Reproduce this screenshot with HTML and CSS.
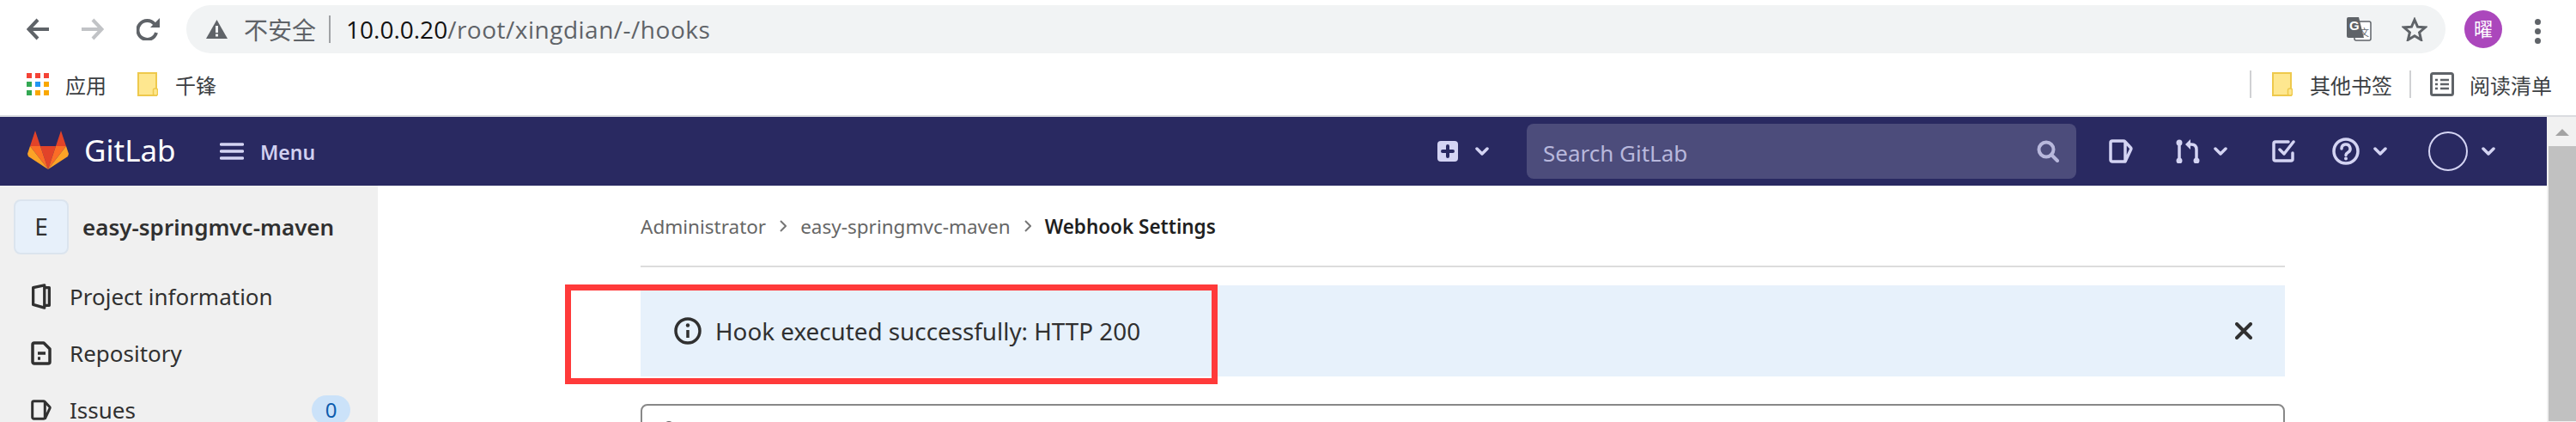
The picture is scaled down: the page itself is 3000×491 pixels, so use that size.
FILE: index.html
```html
<!DOCTYPE html>
<html lang="zh-CN">
<head>
  <meta charset="UTF-8" />
  <title>Webhook Settings</title>
  <link rel="stylesheet" href="styles.css">
</head>
<body>

  <!-- Browser toolbar -->
  <div class="toolbar">
    <svg class="tool-icon" viewBox="0 0 26 26"><path class="stroke-grey" d="M26 13H3M13 2 2.500 13 13 24"/></svg>
    <svg class="tool-icon tool-forward" viewBox="0 0 26 26"><path class="stroke-light" d="M0 13h23M13 2l10.500 11L13 24"/></svg>
    <svg class="tool-icon tool-reload" viewBox="0 0 27 26"><path class="stroke-grey" d="M23 17a11 11 0 1 1-2-10"/><path class="fill-grey" d="M27 0v11H16z"/></svg>

    <div class="omnibox">
      <svg class="warn-icon" viewBox="0 0 25 22"><path class="fill-grey" d="M12.500 0 25 22H0z"/><rect x="11" y="7" width="3" height="8" fill="#f1f3f4"/><rect x="11" y="16.500" width="3" height="3" fill="#f1f3f4"/></svg>
      <span class="not-secure">不安全</span>
      <span class="omni-sep"></span>
      <span class="url"><b>10.0.0.20</b>/root/xingdian/-/hooks</span>
      <svg class="translate-icon" viewBox="0 0 29 28">
        <rect x="9" y="5" width="19" height="22" rx="2" fill="#fff" stroke="#5f6368" stroke-width="1.500"/>
        <path class="fill-grey" d="M2 0h12l6 24H2a2 2 0 0 1-2-2V2a2 2 0 0 1 2-2z"/>
        <text x="3" y="15" class="translate-g">G</text>
        <text x="15" y="22" class="translate-x">文</text>
      </svg>
      <svg class="star-icon" viewBox="0 0 30 28"><path d="M15 3l3.500 8.200 8.800.700-6.700 5.800 2 8.600L15 21.700l-7.600 4.600 2-8.600L2.700 11.900l8.800-.700z" fill="none" stroke="#5f6368" stroke-width="3"/></svg>
    </div>

    <div class="profile">曜</div>
    <div class="kebab"><i></i><i></i><i></i></div>
  </div>

  <!-- Bookmarks -->
  <div class="bookmarks">
    <div class="apps-grid">
      <i class="red"></i><i class="red"></i><i class="red"></i>
      <i class="green"></i><i class="blue"></i><i class="orange"></i>
      <i class="green"></i><i class="orange"></i><i class="orange"></i>
    </div>
    <span class="bm-label bm-apps">应用</span>
    <svg class="folder" viewBox="0 0 24 28"><path d="M1 1h21v26H1z" fill="#fee78f" stroke="#eec94c" stroke-width="2"/><rect x="18.500" y="19" width="5" height="8" rx="2" fill="#fee78f" stroke="#eec94c" stroke-width="1.500"/></svg>
    <span class="bm-label">千锋</span>
    <span class="bm-spacer"></span>
    <span class="bm-sep"></span>
    <svg class="folder" viewBox="0 0 24 28"><path d="M1 1h21v26H1z" fill="#fee78f" stroke="#eec94c" stroke-width="2"/><rect x="18.500" y="19" width="5" height="8" rx="2" fill="#fee78f" stroke="#eec94c" stroke-width="1.500"/></svg>
    <span class="bm-label">其他书签</span>
    <span class="bm-sep"></span>
    <svg class="reading-icon" viewBox="0 0 28 28"><rect x="1.500" y="1.500" width="25" height="25" rx="2" fill="none" stroke="#5f6368" stroke-width="3"/><path class="stroke-list" d="M6 9h3M12 9h10M6 14h3M12 14h10M6 19h3M12 19h10"/></svg>
    <span class="bm-label bm-reading">阅读清单</span>
  </div>

  <div class="viewport">
    <div class="page">

      <!-- GitLab navbar -->
      <nav class="navbar">
        <svg class="tanuki" viewBox="0 0 48 45">
          <path fill="#e24329" d="M9 0l6 18H3zM39 0l6 18H33zM15 18h18l-9 27z"/>
          <path fill="#fc6d26" d="M3 18h12l9 27zM33 18h12L24 45z"/>
          <path fill="#fca326" d="M3 18 0 27l1 3 23 15zM45 18l3 9-1 3-23 15z"/>
        </svg>
        <span class="brand">GitLab</span>
        <svg class="nav-icon burger" viewBox="0 0 28 20"><path d="M1.500 2h25M1.500 10h25M1.500 18h25"/></svg>
        <span class="menu-label">Menu</span>
        <span class="nav-spacer"></span>

        <svg class="nav-plus" viewBox="0 0 24 24"><rect width="24" height="24" rx="4" fill="#d4d4f3"/><path d="M12 6v12M6 12h12" stroke="#292961" stroke-width="4" stroke-linecap="round"/></svg>
        <svg class="chevron chevron-plus" viewBox="0 0 16 12"><path d="M2 3l6 6 6-6"/></svg>

        <div class="search">
          <span class="search-text">Search GitLab</span>
          <svg class="search-icon" viewBox="0 0 26 26"><circle cx="11" cy="11" r="8.500"/><path d="M17 17l7 7"/></svg>
        </div>

        <svg class="nav-icon issues-top" viewBox="0 0 28 28"><path d="M4 2h13a2 2 0 0 1 2 2v20a2 2 0 0 1-2 2H4a2 2 0 0 1-2-2V4a2 2 0 0 1 2-2zM19 3l6.500 7a1.500 1.500 0 0 1 .3 1.500L19 26"/></svg>
        <svg class="nav-icon mr-top" viewBox="0 0 28 28"><path d="M4 4v21M24 25V12q0-6-6-6h-3"/><circle class="dot" cx="4" cy="4" r="3.500"/><circle class="dot" cx="4" cy="25" r="3.500"/><circle class="dot" cx="24" cy="25" r="3.500"/><path class="dot" d="M11 6l6-6v12z"/></svg>
        <svg class="chevron chevron-mr" viewBox="0 0 16 12"><path d="M2 3l6 6 6-6"/></svg>
        <svg class="nav-icon todo-top" viewBox="0 0 28 26"><path d="M19 2H4a2 2 0 0 0-2 2v18a2 2 0 0 0 2 2h18a2 2 0 0 0 2-2v-7M9 11l5 5L25 2"/></svg>
        <svg class="nav-icon help-top" viewBox="0 0 32 32"><circle cx="16" cy="16" r="14"/><path d="M11 13a5 5 0 1 1 7.500 4.300c-1.500.9-2.500 1.700-2.500 3.200"/><circle class="dot" cx="16" cy="24.500" r="2"/></svg>
        <svg class="chevron chevron-help" viewBox="0 0 16 12"><path d="M2 3l6 6 6-6"/></svg>
        <div class="nav-avatar"></div>
        <svg class="chevron chevron-user" viewBox="0 0 16 12"><path d="M2 3l6 6 6-6"/></svg>
      </nav>

      <div class="layout">
        <aside class="sidebar">
          <div class="project">
            <div class="project-tile">E</div>
            <span class="project-name">easy-springmvc-maven</span>
          </div>
          <div class="side-item">
            <svg class="side-icon" viewBox="0 0 24 32"><path d="M2 5 16 2v28L2 26zM16 5h6v22h-6"/></svg>
            <span>Project information</span>
          </div>
          <div class="side-item">
            <svg class="side-icon" viewBox="0 0 24 28"><path d="M4 2h11l7 7v15a2 2 0 0 1-2 2H4a2 2 0 0 1-2-2V4a2 2 0 0 1 2-2z"/><path d="M8 14h9M8 20h3"/></svg>
            <span>Repository</span>
          </div>
          <div class="side-item side-last">
            <svg class="side-icon" viewBox="0 0 28 28"><path d="M4 2h13a2 2 0 0 1 2 2v20a2 2 0 0 1-2 2H4a2 2 0 0 1-2-2V4a2 2 0 0 1 2-2zM19 3l6.500 7a1.500 1.500 0 0 1 .3 1.500L19 26"/></svg>
            <span>Issues</span>
            <span class="badge">0</span>
          </div>
        </aside>

        <main class="content">
          <div class="breadcrumb">
            <span>Administrator</span>
            <svg class="crumb-sep" viewBox="0 0 8 14"><path d="M1 1l6 6-6 6"/></svg>
            <span>easy-springmvc-maven</span>
            <svg class="crumb-sep" viewBox="0 0 8 14"><path d="M1 1l6 6-6 6"/></svg>
            <strong>Webhook Settings</strong>
          </div>

          <div class="alert">
            <svg class="alert-icon" viewBox="0 0 32 32"><circle cx="16" cy="16" r="14"/><path d="M16 15v9"/><circle class="alert-dot" cx="16" cy="9.500" r="2.200"/></svg>
            <span>Hook executed successfully: HTTP 200</span>
            <svg class="alert-close" viewBox="0 0 20 20"><path d="M2 2l16 16M18 2 2 18"/></svg>
          </div>

          <div class="card">
            <svg class="card-glyph" viewBox="0 0 12 12"><circle cx="6" cy="6" r="5"/></svg>
          </div>

          <!-- Red annotation drawn over the screenshot -->
          <div class="annotation"></div>
        </main>
      </div>
    </div>

    <div class="scrollbar">
      <div class="scroll-arrow"></div>
      <div class="scroll-thumb"></div>
    </div>
  </div>

</body>
</html>
```

FILE: styles.css
```css
* { box-sizing: border-box; }
html, body {
  height: 491px;
  overflow: hidden;
}
body {
  margin: 0;
  background: white;
  color: #303030;
  font-family: "Noto Sans", "Noto Sans CJK SC", sans-serif;
}

svg { display: block; flex: none; }

.stroke-grey { fill: none; stroke: #5f6368; stroke-width: 4; }
.stroke-light { fill: none; stroke: #c1c3c6; stroke-width: 4; }
.fill-grey { fill: #5f6368; }
.stroke-list { fill: none; stroke: #5f6368; stroke-width: 2.500; }

/* Browser toolbar */
.toolbar {
  height: 68px;
  display: flex;
  align-items: flex-start;
  padding: 6px 0 0 31px;
}

.tool-icon {
  width: 26px;
  height: 26px;
  margin-top: 15px;
}

.tool-forward { margin-left: 38px; }
.tool-reload { width: 27px; margin-left: 38px; }

.omnibox {
  width: 2631px;
  height: 56px;
  margin-left: 31px;
  padding-left: 23px;
  background: #f1f3f4;
  border-radius: 28px;
  display: flex;
  align-items: center;
}

.warn-icon { width: 25px; height: 22px; }

.not-secure {
  margin-left: 19px;
  font-size: 28px;
  color: #5f6368;
}

.omni-sep {
  width: 2px;
  height: 32px;
  margin: 0 18px 0 15px;
  background: #a0a2a5;
}

.url {
  font-size: 28px;
  letter-spacing: 0.500px;
  color: #5f6368;
  flex: 1;
  font-family: "Open Sans", sans-serif;
}
.url b { font-weight: 400; color: #111; letter-spacing: 0; }

.translate-icon { width: 29px; height: 28px; }
.translate-g { font: bold 15px "Liberation Sans", sans-serif; fill: white; }
.translate-x { font: 11px "Noto Sans CJK SC", sans-serif; fill: #5f6368; }

.star-icon { width: 30px; height: 28px; margin: 0 21px 0 35px; }

.profile {
  width: 44px;
  height: 44px;
  margin: 6px 0 0 22px;
  border-radius: 50%;
  background: #ab47bc;
  color: white;
  font-size: 22px;
  text-align: center;
  line-height: 42px;
}

.kebab {
  margin: 16px 0 0 38px;
  display: flex;
  flex-direction: column;
  gap: 4px;
}
.kebab i {
  width: 7px;
  height: 7px;
  border-radius: 50%;
  background: #5f6368;
}

/* Bookmarks */
.bookmarks {
  height: 68px;
  padding: 0 28px 6px 31px;
  border-bottom: 2px solid #dadce0;
  display: flex;
  align-items: center;
}

.apps-grid {
  display: grid;
  grid-template-columns: repeat(3, 6px);
  grid-auto-rows: 6px;
  gap: 4px;
}
.apps-grid .red { background: #f44336; }
.apps-grid .green { background: #34a853; }
.apps-grid .blue { background: #2196f3; }
.apps-grid .orange { background: #f9a800; }

.bm-label {
  font-size: 24px;
  color: #3c4043;
  margin-left: 20px;
  white-space: nowrap;
}
.bm-apps { margin-left: 19px; margin-right: 36px; }
.bm-reading { margin-left: 18px; }

.folder { width: 24px; height: 28px; }
.reading-icon { width: 28px; height: 28px; margin-left: 22px; }
.bm-spacer { flex: 1; }
.bm-sep {
  width: 2px;
  height: 32px;
  background: #d0d1d3;
}
.bm-sep + .folder { margin-left: 24px; }
.bm-label + .bm-sep { margin-left: 20px; }

/* Page with scrollbar */
.viewport { display: flex; }
.page { width: 2966px; flex: none; }

.scrollbar {
  width: 34px;
  height: 355px;
  padding: 14px 0 0 2px;
  background: #f1f1f1;
}
.scroll-arrow {
  width: 0;
  margin: 0 auto 12px;
  border: 8px solid transparent;
  border-top: 0;
  border-bottom: 8px solid #a3a3a3;
}
.scroll-thumb {
  height: 320px;
  background: #c1c1c1;
}

/* Navbar */
.navbar {
  height: 80px;
  background: #292961;
  display: flex;
  align-items: center;
  padding-left: 32px;
}

.tanuki { width: 48px; height: 45px; margin-top: -4px; }

.brand {
  margin-left: 18px;
  color: white;
  font-size: 35px;
  width: 103px;
  margin-top: -3px;
}

.nav-icon {
  fill: none;
  stroke: #d4d4f3;
  stroke-width: 3.500;
  stroke-linecap: round;
  stroke-linejoin: round;
}
.nav-icon .dot { fill: #d4d4f3; stroke: none; }

.burger { width: 28px; height: 20px; margin-left: 55px; }

.menu-label {
  margin-left: 19px;
  padding-top: 2px;
  color: #d1d0f0;
  font-size: 23px;
  font-weight: 600;
}

.nav-spacer { flex: 1; }

.nav-plus { width: 24px; height: 24px; }

.chevron {
  width: 16px;
  height: 12px;
  fill: none;
  stroke: #d4d4f3;
  stroke-width: 3.500;
  stroke-linecap: round;
  stroke-linejoin: round;
}
.chevron-plus { margin-left: 20px; }

.search {
  width: 640px;
  height: 64px;
  margin-left: 44px;
  padding: 0 20px 0 19px;
  background: #4c4c7b;
  border-radius: 8px;
  display: flex;
  align-items: center;
  justify-content: space-between;
}
.search-text { color: #b8b8dc; font-size: 26px; padding-top: 3px; }
.search-icon {
  width: 26px;
  height: 26px;
  fill: none;
  stroke: #b8b8dc;
  stroke-width: 4;
  stroke-linecap: round;
}

.issues-top { width: 28px; height: 28px; margin-left: 38px; }
.mr-top { width: 28px; height: 28px; margin-left: 50px; }
.chevron-mr { margin-left: 16px; }
.todo-top { width: 28px; height: 26px; margin-left: 52px; }
.help-top { width: 32px; height: 32px; margin-left: 42px; }
.chevron-help { margin-left: 16px; }

.nav-avatar {
  width: 46px;
  height: 46px;
  margin-left: 48px;
  border: 2px solid #d4d4f3;
  border-radius: 50%;
}
.chevron-user { margin: 0 60px 0 16px; }

/* Sidebar */
.layout { display: flex; height: 275px; overflow: hidden; }

.sidebar {
  width: 440px;
  flex: none;
  background: #f0f0f0;
  padding: 16px 32px 0 16px;
}

.project {
  display: flex;
  align-items: center;
  gap: 16px;
  margin-bottom: 16px;
}
.project-tile {
  width: 64px;
  height: 64px;
  background: #e7f0fa;
  border: 2px solid #dbe4ee;
  border-radius: 8px;
  font-size: 28px;
  line-height: 58px;
  text-align: center;
}
.project-name {
  font-size: 26px;
  font-weight: 600;
  white-space: nowrap;
}

.side-item {
  height: 66px;
  display: flex;
  align-items: center;
  padding-left: 20px;
  font-size: 26px;
  line-height: 26px;
  white-space: nowrap;
}
.side-item > span:first-of-type { margin-left: 21px; }
.side-last { height: 60px; padding-top: 6px; }

.side-icon {
  width: 24px;
  height: 30px;
  fill: none;
  stroke: #303030;
  stroke-width: 3.500;
  stroke-linejoin: round;
}

.badge {
  margin-left: auto;
  width: 45px;
  height: 34px;
  border-radius: 17px;
  background: #cbe2f9;
  color: #0b5cad;
  font-size: 24px;
  line-height: 34px;
  text-align: center;
}

/* Content */
.content {
  position: relative;
  width: 1915px;
  margin-left: 306px;
}

.breadcrumb {
  height: 95px;
  padding-top: 1px;
  border-bottom: 2px solid #dcdcdc;
  display: flex;
  align-items: center;
  font-size: 22.500px;
  color: #666;
}
.breadcrumb strong { font-weight: 600; color: #1f1f1f; }

.crumb-sep {
  width: 8px;
  height: 14px;
  margin: 0 16px;
  fill: none;
  stroke: #777;
  stroke-width: 2;
}

.alert {
  height: 106px;
  margin-top: 21px;
  padding: 0 38px 0 39px;
  background: #e7f1fb;
  display: flex;
  align-items: center;
  font-size: 27.800px;
}
.alert > span { flex: 1; margin-left: 16px; }

.alert-icon {
  width: 32px;
  height: 32px;
  fill: none;
  stroke: #303030;
  stroke-width: 3.500;
}
.alert-dot { fill: #303030; stroke: none; }

.alert-close {
  width: 20px;
  height: 20px;
  fill: none;
  stroke: #303030;
  stroke-width: 4;
  stroke-linecap: round;
}

.card {
  height: 60px;
  margin-top: 32px;
  padding: 18px 0 0 25px;
  border: 2px solid #888;
  border-radius: 8px;
}
.card-glyph {
  width: 12px;
  height: 12px;
  fill: none;
  stroke: #666;
  stroke-width: 2;
}

.annotation {
  position: absolute;
  left: -88px;
  top: 115px;
  width: 760px;
  height: 116px;
  border: 7px solid #ff3a3a;
}
```
